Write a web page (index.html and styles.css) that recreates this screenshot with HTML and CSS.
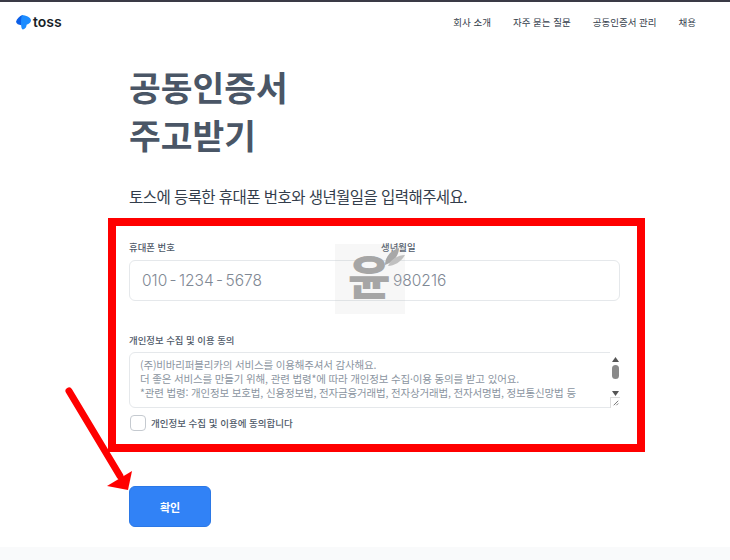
FILE: index.html
```html
<!DOCTYPE html>
<html lang="ko">
<head>
<meta charset="utf-8">
<title>공동인증서 주고받기</title>
<link rel="stylesheet" href="styles.css">
</head>
<body>
<header class="nav">
  <div class="brand">
    <svg class="brand-icon" width="15" height="15" viewBox="0 0 15 15"><path fill="#0b5fe8" d="M6.500 0C3.500 1.200 .8 3.600 0 6.800 .3 8.800 2.600 10 5.400 10.200L7.500 4Z"/><path fill="#1c8cff" d="M6 0C9.800 .2 14.400 2 15 5.200 15 7.500 13 9 10.600 9.800 10.600 12 9.400 13.800 7 14.600 6 14.400 5.400 13 5.200 11 4.800 7 5 3 6 0Z"/></svg>
    <span class="brand-name">toss</span>
  </div>
  <nav class="links">
    <a>회사 소개</a>
    <a>자주 묻는 질문</a>
    <a>공동인증서 관리</a>
    <a>채용</a>
  </nav>
</header>
<main class="main">
  <h1 class="title">공동인증서<br>주고받기</h1>
  <p class="lead">토스에 등록한 휴대폰 번호와 생년월일을 입력해주세요.</p>
  <form class="form">
    <div class="field-labels">
      <span class="label">휴대폰 번호</span>
      <span class="label">생년월일</span>
    </div>
    <div class="pair">
      <span class="pair-value">010 - 1234 - 5678</span>
      <span class="pair-value">980216</span>
    </div>
    <div class="label consent-label">개인정보 수집 및 이용 동의</div>
    <div class="terms">
      <div class="terms-text">(주)비바리퍼블리카의 서비스를 이용해주셔서 감사해요.<br>더 좋은 서비스를 만들기 위해, 관련 법령*에 따라 개인정보 수집·이용 동의를 받고 있어요.<br>*관련 법령: 개인정보 보호법, 신용정보법, 전자금융거래법, 전자상거래법, 전자서명법, 정보통신망법 등</div>
      <div class="scrollbar">
        <svg width="7" height="5" viewBox="0 0 7 5"><path fill="#555" d="M3.500 0 7 5H0Z"/></svg>
        <span class="thumb"></span>
        <svg class="arrow-down" width="7" height="5" viewBox="0 0 7 5"><path fill="#555" d="M0 0H7L3.500 5Z"/></svg>
      </div>
      <svg class="grip" width="10" height="11" viewBox="0 0 10 11"><path fill="none" stroke="#666" d="M8 3 3 8M8 6 6 8"/></svg>
    </div>
    <label class="check"><span class="box"></span><span class="check-text">개인정보 수집 및 이용에 동의합니다</span></label>
    <button type="button" class="submit">확인</button>
  </form>
</main>
<footer class="foot"></footer>

<div class="highlight"></div>
<div class="mark">
  <span class="mark-char">윤</span>
  <svg class="mark-leaf" width="22" height="20" viewBox="0 0 22 20"><path fill="#a8a8a8" d="M2 18C2 10 8 3 16 1 16 8 11 15 2 18Z"/><path fill="#c0c0c0" d="M5 19C11 19 18 15 22 8 15 8 8 12 5 19Z"/></svg>
</div>
<svg class="pointer" width="90" height="120" viewBox="0 0 90 120"><path fill="none" stroke="#f00" stroke-width="7" stroke-linecap="round" d="M6 5 57 90"/><path fill="#f00" d="M44 100 69 85 65 104Z"/></svg>
</body>
</html>
```

FILE: styles.css
```css
* { box-sizing: border-box; }
html, body { margin: 0; height: 560px; overflow: hidden; }
body {
  position: relative;
  background: #fff;
  font-family: "Noto Sans CJK KR", "Noto Sans", sans-serif;
  color: #333d4b;
  border-top: 2px solid #3a3a46;
}
.nav {
  height: 40px;
  display: flex;
  align-items: center;
  justify-content: space-between;
  padding: 0 34px 0 16px;
}
.brand { display: flex; align-items: center; gap: 2px; }
.brand-icon { display: block; }
.brand-name {
  font-family: Inter, sans-serif;
  font-size: 14px;
  font-weight: 600;
  color: #191f28;
  line-height: 16px;
}
.links { display: flex; gap: 22px; font-size: 9.5px; color: #333d4b; line-height: 14px; }
.main { padding: 20px 0 0 129px; width: 620px; }
.title {
  margin: 0;
  font-size: 34.5px;
  line-height: 48px;
  font-weight: 700;
  color: #4a5666;
}
.lead {
  margin: 26px 0 0;
  font-size: 15.5px;
  line-height: 24px;
  color: #333d4b;
  letter-spacing: -0.55px;
  white-space: nowrap;
}
.form { margin-top: 32px; width: 491px; }
.field-labels { display: grid; grid-template-columns: 252px 1fr; }
.label { font-size: 9.4px; line-height: 14px; color: #4e5968; font-weight: 500; }
.pair {
  margin-top: 6px;
  height: 41px;
  display: grid;
  grid-template-columns: 251px 1fr;
  align-items: center;
  padding-left: 12px;
  border: 1px solid #e5e8eb;
  border-radius: 6px;
  font-family: Inter, sans-serif;
  font-size: 15.5px;
  font-weight: 300;
  word-spacing: -2px;
  color: #7f8894;
}
.consent-label { margin-top: 32px; }
.terms {
  position: relative;
  margin-top: 5px;
  height: 56px;
  border: 1px solid #e5e8eb;
  border-radius: 6px;
  padding: 5px 22px 0 10px;
  display: flex;
}
.terms-text {
  flex: 1;
  font-size: 10.5px;
  line-height: 14px;
  color: #8b95a1;
  white-space: nowrap;
  overflow: hidden;
  letter-spacing: -0.16px;
}
.scrollbar {
  position: absolute;
  right: -1px;
  top: -1px;
  bottom: -1px;
  width: 10px;
  padding-top: 5px;
  background: #fff;
  display: flex;
  flex-direction: column;
  align-items: center;
  gap: 3px;
}
.thumb { width: 7px; height: 14px; border-radius: 4px; background: #8a8a8a; }
.arrow-down { margin-top: 9px; }
.grip { position: absolute; right: -1px; bottom: -1px; background: #fff; border-left: 1px solid #ddd; border-top: 1px solid #ddd; }
.check { margin-top: 6px; display: flex; align-items: center; gap: 5px; height: 18px; padding-left: 1px; }
.box { width: 16px; height: 16px; border: 1.5px solid #c5cad0; border-radius: 4px; background: #fff; }
.check-text { font-size: 9.5px; line-height: 14px; color: #4e5968; font-weight: 500; }
.submit {
  display: block;
  margin-top: 54px;
  width: 82px;
  height: 41px;
  border: 1px solid #2b78e6;
  border-radius: 6px;
  background: #3182f6;
  color: #fff;
  font-family: inherit;
  font-size: 11px;
  font-weight: 700;
}
.foot { position: absolute; left: 0; right: 0; top: 545px; height: 13px; background: #f9fafb; }

.highlight {
  position: absolute;
  left: 108px;
  top: 216px;
  width: 537px;
  height: 234px;
  border: 8px solid #f00;
}
.mark {
  position: absolute;
  left: 335px;
  top: 242px;
  width: 70px;
  height: 70px;
  background: rgba(200, 200, 200, 0.14);
}
.mark-char {
  position: absolute;
  left: 13px;
  top: 0;
  font-size: 46px;
  line-height: 60px;
  font-weight: 900;
  color: #a6a6a6;
}
.mark-leaf { position: absolute; right: 0; top: 3px; }
.pointer { position: absolute; left: 63px; top: 384px; }
```
